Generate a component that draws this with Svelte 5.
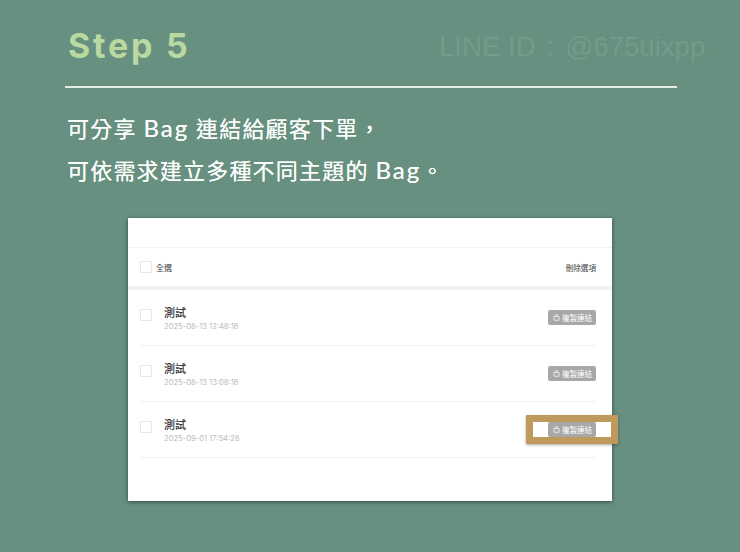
<script>
  let rows = [
    { title: '測試', date: '2025-08-13 12:48:16' },
    { title: '測試', date: '2025-08-13 13:08:16' },
    { title: '測試', date: '2025-09-01 17:54:28', marked: true }
  ];
</script>

<div class="page">
  <header class="head">
    <h1>Step 5</h1>
    <span class="watermark">LINE ID<span class="colon">:</span>@675uixpp</span>
  </header>

  <div class="intro">
    <p>可分享 <span class="latin">Bag</span> 連結給顧客下單，</p>
    <p>可依需求建立多種不同主題的 <span class="latin">Bag</span>。</p>
  </div>

  <div class="card">
    <div class="topbar"></div>

    <div class="select-all">
      <label class="check-label"><span class="box"></span>全選</label>
      <span class="delete">刪除選項</span>
    </div>

    <ul class="list">
      {#each rows as row}
        <li class="row">
          <span class="box"></span>
          <div class="info">
            <div class="title">{row.title}</div>
            <div class="date">{row.date}</div>
          </div>
          <div class="btn-wrap">
            <button class="copy">
              <svg viewBox="0 0 10 10" width="7" height="7" fill="none" stroke="#fff" stroke-width="1">
                <path d="M1.5 3.5h7v5.5h-7z" />
                <path d="M3.5 3.5V2a1.5 1.5 0 0 1 3 0v1.5" />
              </svg>
              複製連結
            </button>
            {#if row.marked}
              <span class="mark"></span>
            {/if}
          </div>
        </li>
      {/each}
    </ul>
  </div>
</div>

<style>
  :global(body) {
    margin: 0;
    background: #679080;
  }

  .page {
    width: 740px;
    height: 552px;
    box-sizing: border-box;
    background: #679080;
    padding-top: 22px;
    overflow: hidden;
    font-family: "Lato", "Noto Sans CJK TC", sans-serif;
  }

  .head {
    margin: 0 63px 0 65px;
    height: 66px;
    box-sizing: border-box;
    padding: 0 0 0 3px;
    display: flex;
    position: relative;
    border-bottom: 2px solid #e3efe6;
    width: 612px;
  }

  h1 {
    margin: 0;
    font-family: "Inter", sans-serif;
    font-size: 34px;
    line-height: 48px;
    font-weight: 700;
    letter-spacing: 2.8px;
    color: #b9d9a0;
  }

  .watermark {
    position: absolute;
    left: 374px;
    top: 9px;
    white-space: nowrap;
    font-family: "Liberation Sans", sans-serif;
    font-size: 27.6px;
    line-height: 32px;
    color: #749b8b;
  }

  .colon {
    margin: 0 11px;
  }

  .intro {
    margin: 20px 0 0 67px;
    color: #fbfdfb;
    font-size: 22px;
    line-height: 42px;
    letter-spacing: 1.2px;
    font-weight: 400;
    text-shadow: 0 0 0.5px #fbfdfb;
  }

  .intro p {
    margin: 0;
    height: 42px;
    white-space: nowrap;
  }

  .latin {
    font-size: 24px;
    line-height: 1;
    letter-spacing: 2px;
  }

  .card {
    margin: 26px 0 0 128px;
    width: 484px;
    height: 283px;
    background: #fff;
    box-shadow: 0 1px 4px rgba(30, 50, 40, 0.75);
    font-family: "Noto Sans CJK TC", "Inter", sans-serif;
  }

  .topbar {
    height: 29px;
    border-bottom: 1px solid #f3f3f3;
  }

  .select-all {
    height: 38px;
    border-bottom: 4px solid #f3f3f3;
    padding: 0 16px 0 12px;
    display: flex;
    align-items: center;
    justify-content: space-between;
    font-size: 8px;
    color: #444;
  }

  .delete {
    font-size: 7.6px;
  }

  .check-label {
    display: flex;
    align-items: center;
    gap: 4px;
  }

  .box {
    width: 10px;
    height: 10px;
    border: 1px solid #e6e6e6;
    border-radius: 1px;
    flex: none;
  }

  .list {
    list-style: none;
    margin: 0;
    padding: 0 16px 0 12px;
  }

  .row {
    height: 56px;
    box-sizing: border-box;
    padding-top: 15px;
    border-bottom: 1px solid #f1f1f1;
    display: flex;
    align-items: flex-start;
  }

  .row > .box {
    margin-top: 4px;
  }

  .info {
    margin-left: 12px;
    flex: 1;
  }

  .title {
    font-size: 11px;
    line-height: 15px;
    font-weight: 500;
    color: #333;
  }

  .date {
    font-family: "Inter", sans-serif;
    font-size: 7.6px;
    line-height: 13px;
    color: #bbb;
  }

  .btn-wrap {
    position: relative;
    margin-top: 5px;
  }

  .copy {
    display: flex;
    align-items: center;
    gap: 2px;
    height: 15px;
    width: 48px;
    padding: 0 0 0 5px;
    border: 0;
    border-radius: 2px;
    background: #a8a8a8;
    color: #fff;
    font-family: inherit;
    font-size: 7.5px;
    white-space: nowrap;
  }

  /* orange frame round the button on the last row */
  .mark {
    position: absolute;
    left: -22px;
    top: -7px;
    width: 92px;
    height: 29px;
    box-sizing: border-box;
    border: 7px solid #c09a5c;
    border-radius: 1px;
    box-shadow: 0 1px 3px rgba(40, 40, 30, 0.4);
  }
</style>
